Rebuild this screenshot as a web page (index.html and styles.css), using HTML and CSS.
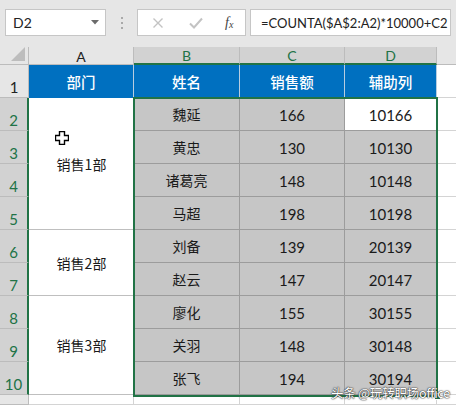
FILE: index.html
```html
<!DOCTYPE html>
<html>
<head>
<meta charset="utf-8">
<link rel="stylesheet" href="styles.css">
</head>
<body>
<div class="app">
  <div class="toolbar">
    <div class="namebox">
      <span class="name">D2</span>
      <svg class="dd" width="8" height="5" viewBox="0 0 8 5"><path d="M0 0H8L4 4.5Z" fill="#6b6b6b"/></svg>
    </div>
    <div class="grip"><i></i><i></i><i></i></div>
    <div class="fxbox">
      <svg width="12" height="12" viewBox="0 0 12 12"><path d="M1.5 1.5L10.5 10.5M10.5 1.5L1.5 10.5" stroke="#c3c3c3" stroke-width="1.4"/></svg>
      <svg width="14" height="12" viewBox="0 0 14 12"><path d="M1 6.5L5 10.5L13 1.5" stroke="#c3c3c3" stroke-width="2" fill="none"/></svg>
      <span class="fx">f<sub>x</sub></span>
    </div>
    <div class="formula">=COUNTA($A$2:A2)*10000+C2</div>
  </div>

  <div class="sheet">
    <div class="corner"><svg width="14" height="14" viewBox="0 0 14 14"><path d="M14 0V14H0Z" fill="#bdbdbd"/></svg></div>
    <div class="ch">A</div>
    <div class="ch sel">B</div>
    <div class="ch sel">C</div>
    <div class="ch sel">D</div>
    <div class="ch last"></div>

    <div class="rh">1</div>
    <div class="c hd">部门</div>
    <div class="c hd">姓名</div>
    <div class="c hd">销售额</div>
    <div class="c hd">辅助列</div>
    <div class="c e"></div>

    <div class="rh rs r2">2</div>
    <div class="c dept g1">销售1部</div>
    <div class="c d">魏延</div><div class="c d n">166</div><div class="c d n active">10166</div><div class="c e"></div>

    <div class="rh rs">3</div>
    <div class="c d">黄忠</div><div class="c d n">130</div><div class="c d n">10130</div><div class="c e"></div>

    <div class="rh rs">4</div>
    <div class="c d">诸葛亮</div><div class="c d n">148</div><div class="c d n">10148</div><div class="c e"></div>

    <div class="rh rs">5</div>
    <div class="c d">马超</div><div class="c d n">198</div><div class="c d n">10198</div><div class="c e"></div>

    <div class="rh rs">6</div>
    <div class="c dept g2">销售2部</div>
    <div class="c d">刘备</div><div class="c d n">139</div><div class="c d n">20139</div><div class="c e"></div>

    <div class="rh rs">7</div>
    <div class="c d">赵云</div><div class="c d n">147</div><div class="c d n">20147</div><div class="c e"></div>

    <div class="rh rs">8</div>
    <div class="c dept g3">销售3部</div>
    <div class="c d">廖化</div><div class="c d n">155</div><div class="c d n">30155</div><div class="c e"></div>

    <div class="rh rs">9</div>
    <div class="c d">关羽</div><div class="c d n">148</div><div class="c d n">30148</div><div class="c e"></div>

    <div class="rh rs">10</div>
    <div class="c d">张飞</div><div class="c d n">194</div><div class="c d n">30194</div><div class="c e"></div>

    <div class="rh"></div>
    <div class="c w"></div><div class="c w"></div><div class="c w"></div><div class="c w"></div><div class="c e"></div>

    <div class="selection"><span class="handle"></span></div>
    <svg class="cursor" width="14" height="14" viewBox="0 0 14 14"><path d="M4.5 0.5H9.5V4.5H13.5V9.5H9.5V13.5H4.5V9.5H0.5V4.5H4.5Z" fill="#fff" stroke="#000" stroke-width="1.4"/></svg>
    <div class="watermark">头条 @玩转职场office</div>
  </div>
</div>
</body>
</html>
```

FILE: styles.css
```css
* { box-sizing: border-box; }
html, body { margin: 0; padding: 0; }
body {
  width: 456px;
  height: 405px;
  overflow: hidden;
  background: #fff;
  font-family: Lato, "Noto Sans CJK SC", sans-serif;
}
.app { width: 456px; height: 405px; display: flex; flex-direction: column; }

.toolbar {
  height: 47px;
  flex: none;
  background: #e6e6e6;
  display: flex;
  align-items: flex-start;
  padding: 9px 5px 0 5px;
}
.namebox {
  width: 101px;
  height: 27px;
  background: #fff;
  border: 1px solid #c6c6c6;
  display: flex;
  align-items: center;
  padding: 0 6px 0 7px;
  font-size: 14px;
  color: #222;
}
.namebox .name { flex: 1; }
.grip {
  width: 31px;
  height: 27px;
  display: flex;
  flex-direction: column;
  align-items: center;
  justify-content: center;
  gap: 3px;
}
.grip i { display: block; width: 2px; height: 2px; background: #a9a9a9; }
.fxbox {
  width: 109px;
  height: 27px;
  background: #fff;
  border: 1px solid #c6c6c6;
  display: flex;
  align-items: center;
  padding: 0 0 0 14px;
}
.fxbox svg:first-child { margin-right: 25px; }
.fxbox svg:nth-child(2) { margin-right: 22px; }
.fx {
  font-family: "Liberation Serif", serif;
  font-style: italic;
  font-size: 14px;
  color: #444;
}
.fx sub { font-size: 10px; vertical-align: -1px; }
.formula {
  margin-left: 4px;
  width: 201px;
  height: 27px;
  background: #fff;
  border: 1px solid #c6c6c6;
  display: flex;
  align-items: center;
  padding-left: 10px;
  font-size: 13px;
  color: #222;
  white-space: nowrap;
  overflow: hidden;
}

.sheet {
  position: relative;
  flex: 1;
  display: grid;
  grid-template-columns: 29px 105px 106px 105px 92px 19px;
  grid-template-rows: 18px repeat(10, 33px) 10px;
}
.corner {
  background: #e6e6e6;
  border-right: 1px solid #bcbcbc;
  border-bottom: 1px solid #bcbcbc;
  display: flex;
  align-items: flex-end;
  justify-content: flex-end;
  padding: 0 3px 3px 0;
}
.ch {
  background: #e6e6e6;
  border-right: 1px solid #bcbcbc;
  border-bottom: 1px solid #bcbcbc;
  display: flex;
  align-items: center;
  justify-content: center;
  font-size: 14px;
  color: #222;
  padding-top: 1px;
}
.ch.sel {
  background: #d2d2d2;
  color: #217346;
  border-bottom: 2px solid #217346;
}
.ch.last { background: #e6e6e6; border-right: none; }

.rh {
  background: #e6e6e6;
  border-right: 1px solid #bcbcbc;
  border-bottom: 1px solid #bcbcbc;
  display: flex;
  align-items: flex-end;
  justify-content: center;
  font-size: 15px;
  color: #222;
  line-height: 1;
  padding-bottom: 2px;
}
.rh.rs {
  background: #d2d2d2;
  color: #217346;
  border-right: 2px solid #217346;
}

.c {
  display: flex;
  align-items: center;
  justify-content: center;
  border-right: 1px solid #d4d4d4;
  border-bottom: 1px solid #d4d4d4;
  font-size: 14px;
  color: #1a1a1a;
  font-family: "Noto Sans CJK SC", sans-serif;
}
.c.hd {
  background: #0070c0;
  color: #fff;
  font-weight: 500;
  border-right: 1px solid #b7cde0;
  border-bottom: none;
  font-size: 14.5px;
}
.c.dept {
  background: #fff;
  border-bottom: 1px solid #bfbfbf;
  border-right: none;
}
.g1 { grid-column: 2; grid-row: 3 / span 4; }
.g2 { grid-column: 2; grid-row: 7 / span 2; }
.g3 { grid-column: 2; grid-row: 9 / span 3; }
.c.d {
  background: #c6c6c6;
  border-right: 1px solid #9c9c9c;
  border-bottom: 1px solid #9c9c9c;
}
.c.n {
  font-family: Lato, sans-serif;
  font-size: 15px;
  padding-top: 1px;
}
.c.active { background: #fff; }
.c.e { background: #fff; border-right: none; }
.c.w { background: #fff; }

.selection {
  position: absolute;
  left: 133px;
  top: 50px;
  width: 305px;
  height: 300px;
  border: 2px solid #217346;
  pointer-events: none;
}
.handle {
  position: absolute;
  right: -5px;
  bottom: -5px;
  width: 7px;
  height: 7px;
  background: #217346;
  border: 1px solid #fff;
}
.cursor {
  position: absolute;
  left: 55px;
  top: 84px;
}
.watermark {
  position: absolute;
  left: 331px;
  top: 336px;
  font-family: "Noto Sans CJK SC", sans-serif;
  font-size: 12.5px;
  color: #fff;
  letter-spacing: -0.2px;
  text-shadow: 0 0 1px #333, 0 0 1px #333, 0 0 2px #555;
  white-space: nowrap;
}
```
